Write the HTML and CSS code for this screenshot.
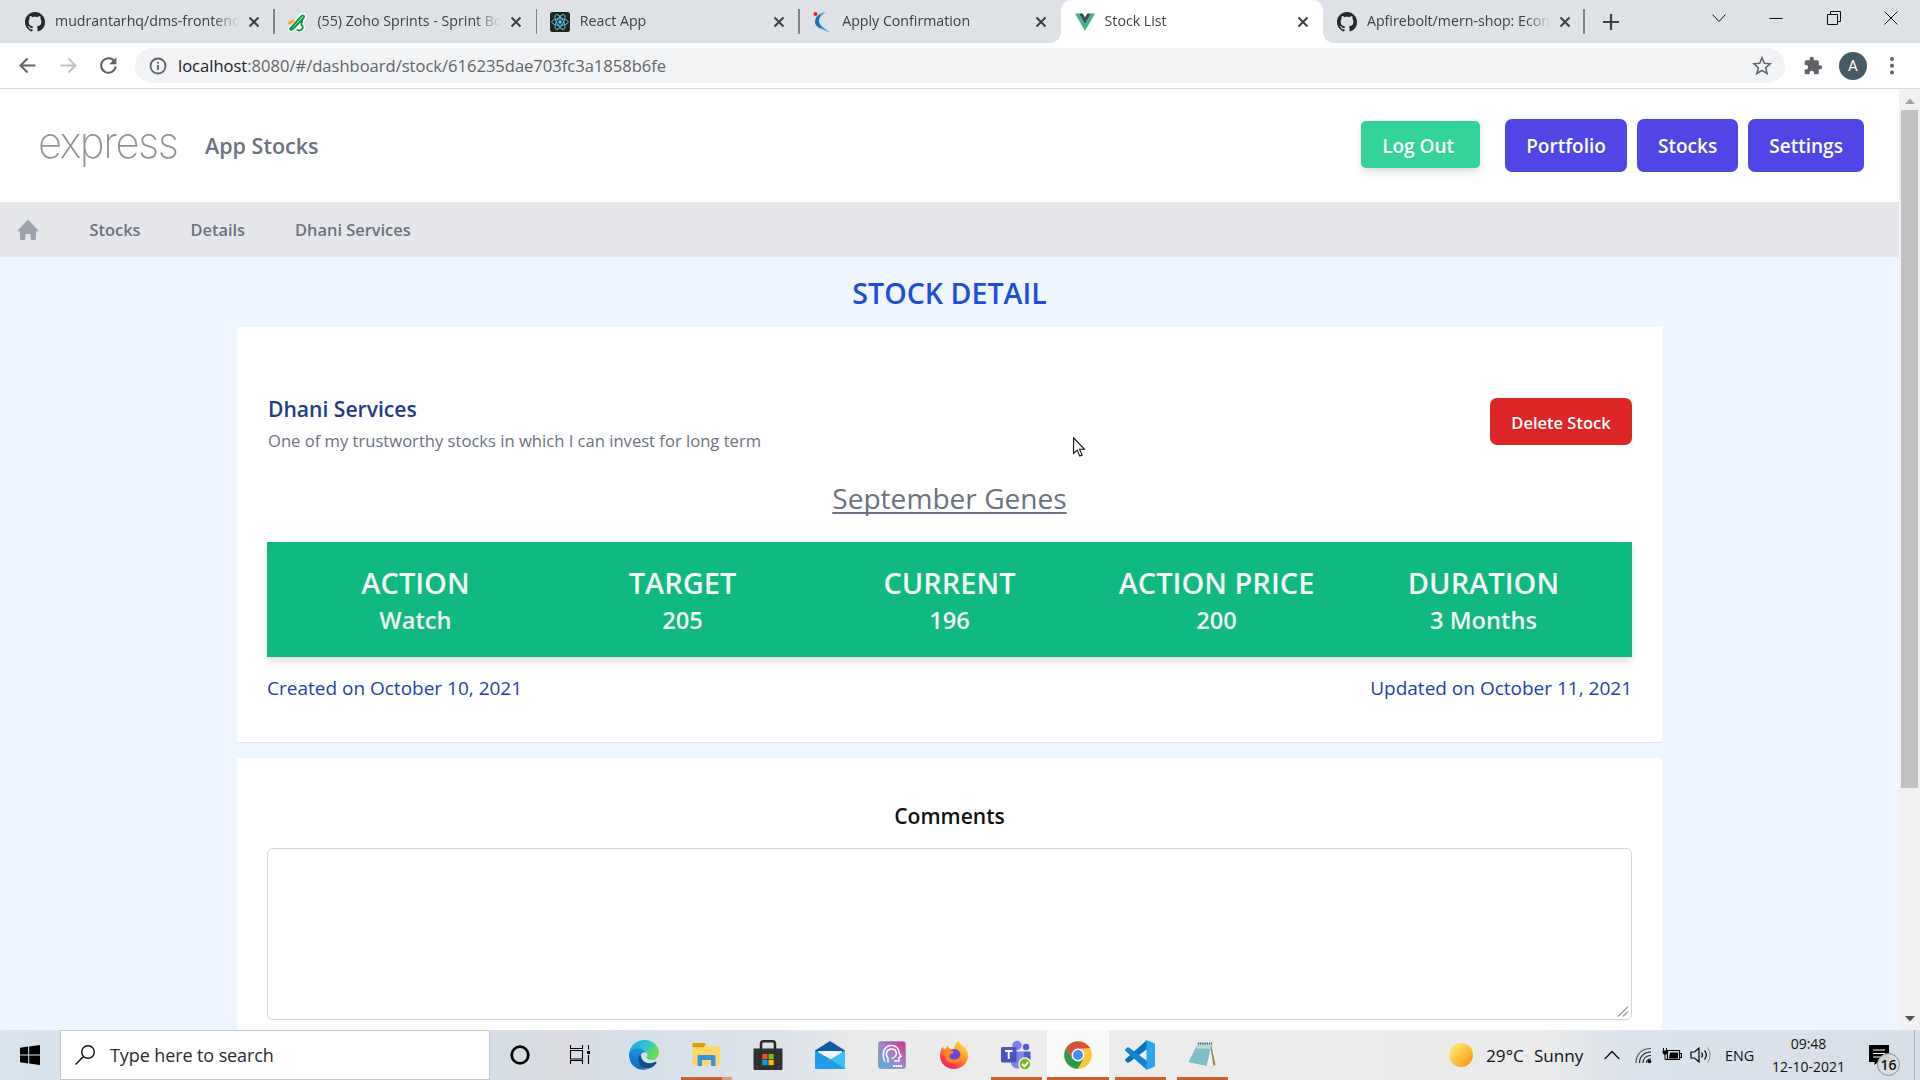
FILE: index.html
```html
<!DOCTYPE html>
<html lang="en">
<head>
<meta charset="utf-8">
<title>Stock List</title>
<link rel="stylesheet" href="styles.css">
</head>
<body>
<svg width="0" height="0" class="defs" aria-hidden="true">
  <symbol id="github" viewBox="0 0 16 16"><path fill="#24292f" d="M8 0C3.58 0 0 3.58 0 8c0 3.54 2.29 6.53 5.47 7.59.4.07.55-.17.55-.38 0-.19-.01-.82-.01-1.49-2.01.37-2.53-.49-2.69-.94-.09-.23-.48-.94-.82-1.13-.28-.15-.68-.52-.01-.53.63-.01 1.08.58 1.23.82.72 1.21 1.87.87 2.33.66.07-.52.28-.87.51-1.07-1.78-.2-3.64-.89-3.64-3.95 0-.87.31-1.59.82-2.15-.08-.2-.36-1.02.08-2.12 0 0 .67-.21 2.2.82.64-.18 1.32-.27 2-.27s1.36.09 2 .27c1.53-1.04 2.2-.82 2.2-.82.44 1.1.16 1.92.08 2.12.51.56.82 1.27.82 2.15 0 3.07-1.87 3.75-3.65 3.95.29.25.54.73.54 1.48 0 1.07-.01 1.93-.01 2.2 0 .21.15.46.55.38A8.01 8.01 0 0 0 16 8c0-4.42-3.58-8-8-8z"/></symbol>
  <symbol id="close" viewBox="0 0 12 12"><path d="M1.5 1.5l9 9M10.5 1.5l-9 9" stroke="#3c4043" stroke-width="2" fill="none"/></symbol>
</svg>

<header class="tabs">
  <div class="tab">
    <svg class="favicon"><use href="#github"/></svg>
    <span class="tab-title">mudrantarhq/dms-frontend</span>
    <svg class="close"><use href="#close"/></svg>
  </div>
  <div class="tab">
    <svg class="favicon" viewBox="0 0 20 20"><g stroke-linejoin="round"><path d="M3 17L14.500 4c2-1.500 3.500.5 2 2L6.500 16.500C5 18 3.500 18 3 17zM10 12.500l5-4.500c.5 2-1 3.500-.5 5 2 1.500 1.500 4-.5 5-1.500.7-3 .5-4-.3" stroke="#fff" stroke-width="4.500" fill="#fff"/><path d="M1.500 11.500L7 8.500" stroke="#f5a623" stroke-width="3"/><path d="M3 17L14.500 4c2-1.500 3.500.5 2 2L6.500 16.500C5 18 3.500 18 3 17zM10 12.500l5-4.500c.5 2-1 3.500-.5 5 2 1.500 1.500 4-.5 5-1.500.7-3 .5-4-.3" stroke="#0a9648" stroke-width="1.900" fill="#fff"/></g></svg>
    <span class="tab-title">(55) Zoho Sprints - Sprint Bo</span>
    <svg class="close"><use href="#close"/></svg>
  </div>
  <div class="tab">
    <svg class="favicon" viewBox="0 0 20 20"><rect width="20" height="20" rx="2.500" fill="#222"/><g fill="none" stroke="#53c1de" stroke-width="1"><ellipse cx="10" cy="10" rx="8.300" ry="3.300"/><ellipse cx="10" cy="10" rx="8.300" ry="3.300" transform="rotate(60 10 10)"/><ellipse cx="10" cy="10" rx="8.300" ry="3.300" transform="rotate(120 10 10)"/></g><circle cx="10" cy="10" r="1.700" fill="#61dafb"/></svg>
    <span class="tab-title">React App</span>
    <svg class="close"><use href="#close"/></svg>
  </div>
  <div class="tab">
    <svg class="favicon" viewBox="0 0 20 20"><circle cx="3.500" cy="2" r="2" fill="#ed1c24"/><path d="M14 0C7 1 3 5 3 10c0 4 4 7 15 10C11 16 7 13 7 9c0-4 3-7 7-9z" fill="#1673bd"/><path d="M14 0c-3 .5-4.500 1.500-6 3M9 16c3 2 5 3 9 4" stroke="#9cc4e3" fill="none"/></svg>
    <span class="tab-title">Apply Confirmation</span>
    <svg class="close"><use href="#close"/></svg>
  </div>
  <div class="tab active">
    <svg class="favicon" viewBox="0 0 20 20"><path d="M0 1.500h4L10 12 16 1.500h4L10 19z" fill="#41b883"/><path d="M4 1.500h3.700L10 5.500l2.300-4H16L10 12z" fill="#35495e"/></svg>
    <span class="tab-title">Stock List</span>
    <svg class="close"><use href="#close"/></svg>
  </div>
  <div class="tab last">
    <svg class="favicon"><use href="#github"/></svg>
    <span class="tab-title">Apfirebolt/mern-shop: Econ</span>
    <svg class="close"><use href="#close"/></svg>
  </div>
  <svg class="new-tab" viewBox="0 0 16 16"><path d="M8 0v16M0 8h16" stroke="#3c4043" stroke-width="2.200"/></svg>
  <div class="window-controls">
    <svg viewBox="0 0 14 14"><path d="M.5 3.500l6.500 7 6.500-7"/></svg>
    <svg viewBox="0 0 14 14"><path d="M.5 7.500h13"/></svg>
    <svg viewBox="0 0 14 14"><path d="M.5 3.500h10v10h-10zM3.500 3.500v-3h10v10h-3"/></svg>
    <svg viewBox="0 0 14 14"><path d="M.5.5l13 13M13.500.5l-13 13"/></svg>
  </div>
</header>

<div class="toolbar">
  <svg class="nav" viewBox="0 0 24 24"><path d="M21 12H4M12 4l-8 8 8 8" fill="none" stroke="#5f6368" stroke-width="2.200"/></svg>
  <svg class="nav" viewBox="0 0 24 24"><path d="M3 12h17M12 4l8 8-8 8" fill="none" stroke="#bdc1c6" stroke-width="2.200"/></svg>
  <svg class="nav" viewBox="0 0 24 24"><path d="M19 7.500A8.300 8.300 0 1 0 20.200 13" fill="none" stroke="#5f6368" stroke-width="2.300"/><path d="M21 2.500v8.200h-8.200z" fill="#5f6368"/></svg>
  <div class="omnibox">
    <svg class="info" viewBox="0 0 18 18"><circle cx="9" cy="9" r="7.500" fill="none" stroke="#5f6368" stroke-width="1.800"/><path d="M9 8v5M9 4.700v1.900" stroke="#5f6368" stroke-width="1.900"/></svg>
    <span class="url"><b>localhost</b>:8080/#/dashboard/stock/616235dae703fc3a1858b6fe</span>
    <svg class="star" viewBox="0 0 20 20"><path d="M10 1.800l2.300 5.500 5.900.5-4.500 3.900 1.400 5.800L10 14.400l-5.100 3.100 1.400-5.800-4.500-3.900 5.900-.5z" fill="none" stroke="#5f6368" stroke-width="1.600"/></svg>
  </div>
  <svg class="puzzle" viewBox="0 0 24 24"><path fill="#5f6368" d="M20.500 11H19V7c0-1.100-.9-2-2-2h-4V3.500a2.500 2.500 0 0 0-5 0V5H4c-1.100 0-2 .9-2 2v3.800h1.500a2.700 2.700 0 0 1 0 5.400H2V20c0 1.100.9 2 2 2h3.800v-1.500a2.700 2.700 0 0 1 5.400 0V22H17c1.100 0 2-.9 2-2v-4h1.500a2.500 2.500 0 0 0 0-5z"/></svg>
  <span class="avatar">A</span>
  <svg class="dots" viewBox="0 0 4 18"><g fill="#5f6368"><circle cx="2" cy="2" r="2"/><circle cx="2" cy="8.700" r="2"/><circle cx="2" cy="15.400" r="2"/></g></svg>
</div>

<div class="viewport">
  <div class="page">
    <header class="app-header">
      <span class="logo">express</span>
      <span class="app-name">App Stocks</span>
      <nav class="app-nav">
        <a class="btn logout">Log Out</a>
        <a class="btn">Portfolio</a>
        <a class="btn">Stocks</a>
        <a class="btn">Settings</a>
      </nav>
    </header>
    <nav class="crumbs">
      <svg viewBox="0 0 20 20"><path fill="#9ca3af" d="M10.900.4a1.200 1.200 0 0 0-1.800 0L.3 9.800c-.6.700-.2 1.700.7 1.700H2v7c0 .7.500 1.500 1.300 1.500h3.200c.5 0 .8-.4.8-.8V15c0-.6.400-1 1-1h3.400c.6 0 1 .4 1 1v4.200c0 .4.300.8.800.8h3.200c.8 0 1.300-.8 1.300-1.500v-7h1c.9 0 1.300-1 .7-1.700z"/></svg>
      <a>Stocks</a>
      <a>Details</a>
      <a>Dhani Services</a>
    </nav>
    <main>
      <h1>STOCK DETAIL</h1>
      <section class="card detail">
        <div class="detail-head">
          <div>
            <h2>Dhani Services</h2>
            <p>One of my trustworthy stocks in which I can invest for long term</p>
          </div>
          <a class="delete">Delete Stock</a>
        </div>
        <h3>September Genes</h3>
        <dl class="stats">
          <div><dt>ACTION</dt><dd>Watch</dd></div>
          <div><dt>TARGET</dt><dd>205</dd></div>
          <div><dt>CURRENT</dt><dd>196</dd></div>
          <div><dt>ACTION PRICE</dt><dd>200</dd></div>
          <div><dt>DURATION</dt><dd>3 Months</dd></div>
        </dl>
        <div class="dates"><span>Created on October 10, 2021</span><span>Updated on October 11, 2021</span></div>
      </section>
      <section class="card comments">
        <h2>Comments</h2>
        <div class="comment-box">
          <svg viewBox="0 0 12 12"><path d="M1 11.500L11 1.500M6 11.500l5-5" stroke="#555" fill="none"/></svg>
        </div>
      </section>
    </main>
    <svg class="cursor" viewBox="0 0 13 20"><path d="M.6.8v15.700l3.600-3.400 2.600 6 2.300-1-2.600-5.800h5z" fill="#fff" stroke="#111" stroke-width="1.100"/></svg>
  </div>
  <div class="scrollbar">
    <svg viewBox="0 0 10 6"><path d="M0 6l5-5.500L10 6z" fill="#a3a3a3"/></svg>
    <span class="thumb"></span>
    <svg viewBox="0 0 10 6"><path d="M0 0h10L5 5.500z" fill="#505050"/></svg>
  </div>
</div>

<footer class="taskbar">
  <div class="start"><svg viewBox="0 0 20 20"><path d="M0 2.700l8.200-1.100v7.900H0zM9.200 1.400L20 0v9.500H9.200zM0 10.500h8.200v7.900L0 17.300zM9.200 10.500H20V20L9.200 18.600z"/></svg></div>
  <div class="search">
    <svg viewBox="0 0 20 20"><circle cx="13" cy="7" r="6.300" fill="none" stroke="#111" stroke-width="1.400"/><path d="M8.500 11.500L.5 19.500" stroke="#111" stroke-width="1.400"/></svg>
    <span>Type here to search</span>
  </div>
  <div class="pinned">
    <div class="sys"><svg viewBox="0 0 30 30"><circle cx="15" cy="15" r="8.300" fill="none" stroke="#000" stroke-width="2.700"/></svg></div>
    <div class="sys"><svg viewBox="0 0 30 30"><path d="M5.500 5v3.500h12V5M5.500 24v-3.500h12V24M5.500 10.500h12v8.500h-12zM23.500 5v4.500M23.500 15v9" fill="none" stroke="#000" stroke-width="1.100"/><path d="M22 11h3v3h-3z"/></svg></div>
    <div class="slot edge"><svg viewBox="0 0 30 30">
      <defs><linearGradient id="eg" x1="0" y1="0" x2="1" y2=".5"><stop offset="0" stop-color="#1c9be0"/><stop offset=".55" stop-color="#2fc3cf"/><stop offset="1" stop-color="#6be04a"/></linearGradient><linearGradient id="eb" x1="0" y1="0" x2="0" y2="1"><stop offset="0" stop-color="#1b92dc"/><stop offset="1" stop-color="#0c6bbd"/></linearGradient></defs>
      <path d="M0 14C1 5 8 0 15.500 0 24 0 30 6 30 12.500c0 5-3.500 7.500-7.500 7.500-3.500 0-5-1-5-2.200 0-1 1-1.400 1-3.300C18.500 11.500 15 9 10.500 9 5 9 1.500 11.500 0 14z" fill="url(#eg)"/>
      <path d="M0 15c0-4 4-6.500 9-6.500 4 0 7.500 1.800 9 4.500-2-1.700-6.500-.5-7.500 4C9.500 22 13 28.500 18 29.500 8 31.500 0 24.500 0 15z" fill="url(#eb)"/>
      <path d="M11.500 13.500c-3 4-2.500 9.500 1 13 4.500 4 11 2.500 15-3.500.5-1-.5-1.500-1.500-1-7 3-14 .5-14.500-8.500z" fill="#114a8c"/></svg></div>
    <div class="slot running multi"><svg viewBox="0 0 30 30"><path d="M1.500 4.500c0-1 .5-1.500 1.500-1.500h10.500l2 3H28c.8 0 1 .5 1 1V24c0 1-.5 1.500-1.500 1.500H3c-1 0-1.500-.5-1.500-1.500z" fill="#ffd768"/><path d="M1.500 4.500C1.500 3.500 2 3 3 3h10.500l1.500 1.500L12.500 7h-11z" fill="#e09c04"/><path d="M6.500 26V16.500c0-1 .5-1.500 1.500-1.500h15c1 0 1.500.5 1.500 1.500V26H20v-6h-9v6z" fill="#3a94dc"/></svg></div>
    <div class="slot"><svg viewBox="0 0 30 30"><path d="M8 9V4c0-2 1-2.700 2.500-2.700h9c1.500 0 2.500.7 2.500 2.700v5" fill="none" stroke="#2b2b2b" stroke-width="2.600"/><path d="M.5 8.500h29V28c0 1.500-.5 2-2 2h-25c-1.500 0-2-.5-2-2z" fill="#303030"/><path d="M9.300 14h5.200v5.200H9.300z" fill="#f25022"/><path d="M15.500 14h5.200v5.200h-5.200z" fill="#7fba00"/><path d="M9.300 20h5.200v5.200H9.300z" fill="#00a4ef"/><path d="M15.500 20h5.200v5.200h-5.200z" fill="#ffb900"/></svg></div>
    <div class="slot"><svg viewBox="0 0 30 30"><path d="M0 10.500L15 1l15 9.500v5H0z" fill="#0c5ba8"/><path d="M3 11h24v4L15 22 3 15z" fill="#f3f3f3"/><path d="M0 10.500l15.500 8.800L0 29z" fill="#1d9be6"/><path d="M30 10.500V29H0z" fill="#38c0f5"/><path d="M15.500 19.300L30 29H0z" fill="#209fe8"/></svg></div>
    <div class="slot"><svg viewBox="0 0 30 30"><defs><linearGradient id="ms" x1="0" y1="1" x2="1" y2="0"><stop offset="0" stop-color="#46b8dc"/><stop offset=".5" stop-color="#a283cc"/><stop offset="1" stop-color="#da2c8b"/></linearGradient></defs><rect x="1.500" y="1.500" width="27" height="27" rx="2.500" fill="url(#ms)" stroke="#9b9db5"/><path d="M8 21.500C4 14 7 5.500 14.500 5.500c5 0 7.500 3.500 7.500 7l2 4-2 1v3.500h-5M11 22.500v-4c-3.500-4.500-1-9.500 3.500-9.500 5 0 6 5 3.500 7.500L14.500 19" fill="none" stroke="#fff" stroke-width="1.500"/><path d="M16 26h9" stroke="#fff" stroke-width="2" stroke-dasharray="2 .4"/></svg></div>
    <div class="slot"><svg viewBox="0 0 30 30"><defs><linearGradient id="ff" x1=".8" y1="0" x2=".2" y2="1"><stop offset="0" stop-color="#ffdf3a"/><stop offset=".45" stop-color="#ff9a22"/><stop offset=".8" stop-color="#fb3550"/><stop offset="1" stop-color="#e8228a"/></linearGradient></defs><path d="M4 6c0 2 .5 3 1.500 3.500L9 5.500c0 1.500 1 3 3 3.500l3 .5C15 5 18 2.500 19.500.5c1 3 3.500 4 5 7l1-1c2 3 3.500 6 3.500 9.500C29 23.500 22.500 29 15 29S1 23.500 1 16c0-4 1-7 3-10z" fill="url(#ff)"/><circle cx="15.500" cy="15" r="6" fill="#7043d8"/><path d="M5 11c3-2 7-1 10 1-1 2-4 1.500-4.500 3.500-.5 3 3 4.500 6 4 3-.5 5-3 4.500-6 3 5-1 10-6 10S5 19 5 11z" fill="#ff8423"/></svg></div>
    <div class="slot running"><svg class="teams" viewBox="0 0 32 30"><circle cx="17" cy="5.500" r="4.700" fill="#7b83eb"/><circle cx="26" cy="7" r="3.200" fill="#5059c9"/><path d="M11 11.500h13V22c0 4-3 6.500-6.500 6.500S11 26 11 22z" fill="#7b83eb"/><path d="M24 11.500h6.500V19c0 3-2 5-5 5l-1.500-.5z" fill="#5059c9"/><rect x="1" y="7" width="15.500" height="15.500" rx="1.500" fill="#4b53bc"/><path d="M5 11h7.500M8.750 11v8" stroke="#fff" stroke-width="2"/><circle cx="25" cy="24" r="6" fill="#7ab80e" stroke="#f4f4f4" stroke-width="1.500"/><path d="M22 24l2.300 2.300L28.300 22" fill="none" stroke="#fff" stroke-width="1.900"/></svg></div>
    <div class="slot running current"><svg viewBox="0 0 30 30"><circle cx="15" cy="15" r="13.800" fill="#fcc934"/><path d="M3.050 8.100A13.800 13.800 0 0 1 26.950 8.100L15 9l-6 9.500z" fill="#d94f41"/><path d="M3.050 8.100A13.800 13.800 0 0 0 15 28.800l6-10.300-6 3-6-3z" fill="#2a9c4e"/><path d="M15 8.700h12.300c3.500 8-1.500 20-12.300 20.100L21 18z" fill="#fcc934"/><circle cx="15" cy="15" r="6.400" fill="#fff"/><circle cx="15" cy="15" r="5" fill="#4b8bf5"/></svg></div>
    <div class="slot running"><svg viewBox="0 0 30 30"><path d="M22 0v9L4 22.500c-.7.500-1.300.5-1.800 0l-1.700-1.700c-.6-.5-.6-1.300 0-1.800z" fill="#0a72bd"/><path d="M22 30v-9L4 7.500c-.7-.5-1.300-.5-1.800 0L.5 9.200c-.6.500-.6 1.300 0 1.800z" fill="#1384cf"/><path d="M21.500 0L30 3.500v23L21.500 30c-.5 0-.5-.5 0-1z" fill="#29a8f0"/></svg></div>
    <div class="slot running"><svg viewBox="0 0 30 30"><path d="M24 4l4.500 21-5 2.500L18 24z" fill="#9c7c50"/><path d="M23 4l3.500 22-4 2L14 25z" fill="#eef0f0"/><path d="M11 3h14l-5.500 23L1.500 22z" fill="#7fbdc9"/><path d="M11 3h14l-2 6-14-.5z" fill="#b4dbe2"/><path d="M11 3.500h14" stroke="#555" stroke-width="2" stroke-dasharray="1.200 1"/></svg></div>
  </div>
  <div class="tray">
    <svg class="sun" viewBox="0 0 24 24"><defs><linearGradient id="sn" x1="0" y1="0" x2="1" y2="1"><stop offset=".2" stop-color="#ffe16a"/><stop offset="1" stop-color="#ff8c00"/></linearGradient></defs><circle cx="12" cy="12" r="12" fill="url(#sn)"/></svg>
    <span class="temp">29°C</span><span class="weather">Sunny</span>
    <svg class="up" viewBox="0 0 16 10"><path d="M.7 9L8 1.500 15.300 9" fill="none" stroke="#111" stroke-width="1.400"/></svg>
    <svg class="wifi" viewBox="0 0 17 17"><g fill="none" stroke="#222" stroke-width="1.200"><path d="M1 16C1 7 7 1.500 16 1.500" stroke="#555"/><path d="M4.500 16C4.500 9.500 9 5 16 5"/><path d="M8 16c0-4.500 3-7.500 8-7.500"/><path d="M11.500 16c0-2.500 1.500-4 4.500-4"/></g><circle cx="14.500" cy="14.500" r="1.800"/></svg>
    <svg class="battery" viewBox="0 0 20 14"><path d="M5.500 2.500h12v9h-12zM18 5.500h1.500v4H18" fill="none" stroke="#000" stroke-width="1.200"/><path d="M8 4.500h8v6H7z"/><path d="M1.500 0v2.500M4.500 0v2.500M3 6v5.500h2" stroke="#000" fill="none"/><path d="M.5 2.500h5v2.500L4 6.500H2L.5 5z"/></svg>
    <svg class="volume" viewBox="0 0 22 18"><path d="M1 6h3.500L9 2v14l-4.500-4H1z" fill="none" stroke="#000" stroke-width="1.200"/><path d="M11.500 6.500c1.200 1.500 1.200 3.500 0 5M14.500 4.500c2.200 2.700 2.200 6.300 0 9" fill="none" stroke="#000" stroke-width="1.200"/><path d="M17.500 1.500c3.500 4.500 3.500 10.500 0 15" fill="none" stroke="#999" stroke-width="1.200"/></svg>
    <span class="lang">ENG</span>
    <div class="clock"><span>09:48</span><span>12-10-2021</span></div>
    <div class="notify"><svg viewBox="0 0 20 20"><path d="M0 0h20v17H9l-3.500 3v-3H0z"/><path d="M4 5h12M4 8.500h12M4 12h8" stroke="#fff" stroke-width="1.200"/></svg><b>16</b></div>
    <span class="peek"></span>
  </div>
</footer>
</body>
</html>
```
FILE: styles.css
```css
* { box-sizing: border-box; margin: 0; padding: 0; }

body {
  width: 1920px;
  height: 1080px;
  overflow: hidden;
  display: flex;
  flex-direction: column;
  background: #fff;
  font-family: "Open Sans", "Noto Sans", sans-serif;
}

svg { display: block; flex: none; }
.defs { position: absolute; }

/* Browser tab strip */
.tabs {
  height: 43px;
  flex: none;
  display: flex;
  align-items: center;
  padding-left: 11.500px;
  background: #dee1e6;
}
.tab {
  position: relative;
  width: 262.400px;
  height: 43px;
  flex: none;
  display: flex;
  align-items: center;
  padding: 0 14px 0 13.500px;
}
.tab.last { width: 260.500px; padding-right: 13px; }
.tab::after {
  content: "";
  position: absolute;
  right: -1px;
  top: 9px;
  width: 1.500px;
  height: 25px;
  background: #808388;
}
.tab:nth-child(4)::after { display: none; }
.tab.active { background: #fff; border-radius: 10px 10px 0 0; }
.tab.active::after,
.tab.active::before {
  content: "";
  position: absolute;
  top: auto;
  bottom: 0;
  width: 10px;
  height: 10px;
}
.tab.active::before { left: -10px; background: radial-gradient(circle at 0 0, #dee1e6 9.500px, #fff 10px); }
.tab.active::after { right: -10px; background: radial-gradient(circle at 100% 0, #dee1e6 9.500px, #fff 10px); }
.favicon { width: 20px; height: 20px; margin-right: 10px; }
.tab-title {
  flex: 1;
  min-width: 0;
  overflow: hidden;
  white-space: nowrap;
  font-size: 14.200px;
  line-height: 39px;
  padding-bottom: 2px;
  color: #3c4043;
  -webkit-mask-image: linear-gradient(to right, #000 158px, transparent 184px);
  mask-image: linear-gradient(to right, #000 158px, transparent 184px);
}
.close { width: 12px; height: 12px; margin-left: 9px; }
.new-tab { width: 16px; height: 16px; margin-left: 19px; }
.window-controls {
  margin-left: auto;
  display: flex;
  gap: 43.400px;
  padding: 0 22px 7px 0;
}
.window-controls svg { width: 14px; height: 14px; fill: none; stroke: #111; }

/* Address bar */
.toolbar {
  height: 46px;
  flex: none;
  display: flex;
  align-items: center;
  padding: 0 26px 0 17px;
  border-bottom: 1px solid #d6d8db;
}
.nav { width: 21px; height: 21px; margin-right: 19.500px; }
.omnibox {
  width: 1650px;
  height: 35px;
  margin-left: -3.500px;
  display: flex;
  align-items: center;
  padding: 0 13px 0 14px;
  border-radius: 18px;
  background: #f1f3f4;
}
.info { width: 18px; height: 18px; }
.url { margin-left: 11px; flex: 1; font-size: 16.550px; line-height: 35px; color: #5f6368; }
.url b { font-weight: 400; color: #202124; }
.star { width: 20px; height: 20px; }
.puzzle { width: 20px; height: 20px; margin-left: 18px; }
.avatar {
  width: 28px;
  height: 28px;
  margin-left: 16px;
  border-radius: 50%;
  background: #455a64;
  color: #fff;
  font: 15px/29px Roboto, sans-serif;
  text-align: center;
}
.dots { width: 4px; height: 18px; margin-left: auto; }

/* Page */
.viewport { height: 941px; flex: none; display: flex; overflow: hidden; }
.page { position: relative; width: 1899px; background: #eff6ff; overflow: hidden; }
.app-header {
  height: 113px;
  display: flex;
  align-items: center;
  padding: 0 35px 0 38px;
  background: #fff;
}
.logo {
  width: 167px;
  margin-top: -7px;
  font-family: Inter, sans-serif;
  font-weight: 200;
  font-size: 43px;
  line-height: 50px;
  letter-spacing: -1.500px;
  color: #8f9499;
  transform: scaleX(.975);
  transform-origin: 0 50%;
}
.app-name { font-size: 21.500px; font-weight: 600; color: #6b7280; }
.app-nav { margin-left: auto; display: flex; align-items: center; gap: 10px; }
.btn {
  height: 53px;
  padding: 0 21.100px;
  border-radius: 7px;
  background: #4f46e5;
  color: #fff;
  font-size: 19px;
  font-weight: 600;
  line-height: 54px;
}
.btn.logout {
  height: 47px;
  margin: -3px 15px 0 0;
  padding: 0 26px 0 21px;
  border-radius: 5px;
  background: #34d399;
  line-height: 50px;
  box-shadow: 0 5px 8px -1px rgba(0, 0, 0, .12), 0 2px 5px -1px rgba(0, 0, 0, .06);
}
.crumbs {
  height: 55px;
  display: flex;
  align-items: center;
  gap: 50px;
  padding-left: 17.500px;
  background: #e5e7eb;
  color: #6b7280;
  font-size: 16.400px;
  font-weight: 600;
}
.crumbs svg { width: 20px; height: 20px; margin-right: 2px; }

main { padding: 0 237px; }
h1 {
  height: 70px;
  line-height: 72px;
  text-align: center;
  font-size: 28.600px;
  font-weight: 600;
  color: #1d4ed8;
}
.card { padding: 0 30px; background: #fff; }
.detail { height: 416px; padding-top: 66px; border-bottom: 1px solid #e0e5ea; }
.detail-head { display: flex; justify-content: space-between; padding-left: 1px; }
h2 { font-size: 21.100px; font-weight: 600; line-height: 31px; color: #1e3a8a; }
.detail-head p { font-size: 16.600px; line-height: 34px; color: #6b7280; }
.delete {
  width: 142px;
  height: 47px;
  margin-top: 5px;
  border-radius: 7px;
  background: #dc2626;
  color: #fff;
  font-size: 16.500px;
  font-weight: 600;
  line-height: 49px;
  text-align: center;
}
h3 {
  margin: 20px 0 24px;
  text-align: center;
  font-size: 28.100px;
  font-weight: 400;
  line-height: 40px;
  color: #6b7280;
  text-decoration: underline;
  text-decoration-thickness: 2px;
  text-underline-offset: 3px;
  text-decoration-skip-ink: none;
}
.stats {
  height: 115px;
  display: grid;
  grid-template-columns: repeat(5, 1fr);
  padding: 22px 15px 0;
  background: #10b981;
  color: #f3f4f6;
  font-weight: 600;
  text-align: center;
  box-shadow: 0 5px 8px -1px rgba(0, 0, 0, .12), 0 2px 5px -1px rgba(0, 0, 0, .06);
}
.stats dt { font-size: 29px; line-height: 38px; }
.stats dd { font-size: 23.700px; line-height: 37px; }
.dates {
  margin-top: 12px;
  display: flex;
  justify-content: space-between;
  font-size: 19px;
  line-height: 38px;
  color: #1e40af;
}
.comments { height: 500px; margin-top: 15px; padding-top: 41px; }
.comments h2 { line-height: 34px; text-align: center; color: #111; }
.comment-box {
  height: 172px;
  margin-top: 15px;
  display: flex;
  justify-content: flex-end;
  align-items: flex-end;
  padding: 2px;
  border: 1px solid #d1d5db;
  border-radius: 6px;
  box-shadow: 0 1px 2px rgba(0, 0, 0, .05);
}
.comment-box svg { width: 12px; height: 12px; }

/* Mouse pointer resting over the card */
.cursor { position: absolute; left: 1073px; top: 348px; width: 13px; height: 20px; }

.scrollbar {
  width: 21px;
  display: flex;
  flex-direction: column;
  align-items: center;
  padding: 9px 0 8px;
  background: #f1f1f1;
}
.scrollbar svg { width: 10px; height: 6px; }
.thumb { width: 17px; height: 678px; margin: 6px 0 auto; background: #c1c1c1; }

/* Taskbar */
.taskbar {
  height: 50px;
  flex: none;
  display: flex;
  background: linear-gradient(to right, #d9e3ec 0, #d6dde5 500px, #dadbe0 560px, #d6e0ea 640px, #dde3e9 780px, #e9eaeb 860px, #ececec 1000px, #ebebeb 1540px, #dae2ec 1640px, #d9dfe9 1920px);
}
.start { width: 60px; display: grid; place-items: center; }
.start svg { width: 20px; height: 20px; }
.search {
  width: 430px;
  display: flex;
  align-items: center;
  gap: 15px;
  padding-left: 14px;
  border: 1px solid #c6c6c6;
  background: #fff;
  color: #2b2b2b;
  font-size: 18px;
  letter-spacing: -.1px;
}
.search svg { width: 20px; height: 20px; }
.pinned { display: flex; }
.sys, .slot { height: 50px; display: grid; place-items: center; }
.sys { width: 60px; }
.slot { position: relative; width: 62px; }
.slot.edge { margin-left: 3px; }
.sys svg, .slot svg { width: 30px; height: 30px; }
.slot .teams { width: 32px; }
.slot.running::after {
  content: "";
  position: absolute;
  left: 5.500px;
  right: 5.500px;
  bottom: 0;
  height: 3px;
  background: #ca6028;
}
.slot.multi::after { background: linear-gradient(to right, #ca6028 41px, #e09b7c 41px); }
.slot.current { background: #fafafa; }
.slot.current::after { left: 0; right: 0; }

.tray { flex: 1; display: flex; align-items: center; padding-left: 216px; color: #111; }
.sun { width: 24px; height: 24px; }
.temp { width: 48px; margin-left: 13px; font-size: 17.200px; }
.weather { width: 70px; font-size: 17.100px; }
.temp, .weather { line-height: 53px; }
.up { width: 16px; height: 10px; }
.wifi { width: 17px; height: 17px; margin-left: 15px; }
.battery { width: 20px; height: 14px; margin-left: 10px; }
.volume { width: 22px; height: 18px; margin-left: 8px; }
.lang { margin-left: 13px; width: 46px; font-size: 14.300px; }
.clock {
  width: 75px;
  display: flex;
  flex-direction: column;
  align-items: center;
  font-size: 14px;
  line-height: 23px;
}
.notify { position: relative; width: 20px; height: 20px; margin-left: 23px; }
.notify svg { width: 20px; height: 20px; }
.notify b {
  position: absolute;
  left: 8px;
  top: 8px;
  width: 23px;
  height: 23px;
  border: 1px solid #8a8d90;
  border-radius: 50%;
  background: rgba(218, 220, 222, .94);
  font-size: 14px;
  font-weight: 600;
  line-height: 21px;
  text-align: center;
}
.peek { width: 1px; height: 50px; margin-left: 25px; background: #a9adb5; }
```
